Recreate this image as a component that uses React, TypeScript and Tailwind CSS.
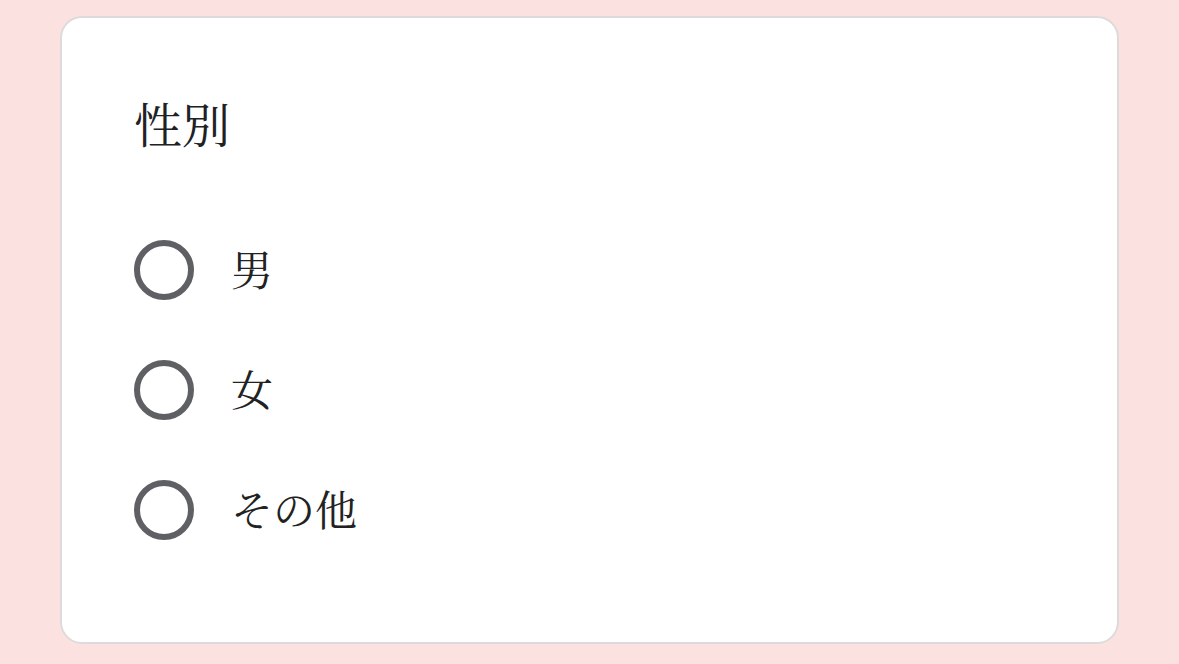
import React, { useState } from 'react';

const options = ['男', '女', 'その他'];

const fontStack = '"Noto Serif CJK JP", "Noto Sans CJK JP", serif';

const GenderField: React.FC = () => {
  const [selected, setSelected] = useState<string | null>(null);

  return (
    <div className="h-[628px] rounded-[22px] border-2 border-[#dedadc] bg-white pl-[72px] pt-[81px]">
      <h2 className="text-[48px] leading-none text-[#202124]" style={{ fontFamily: fontStack }}>
        性別
      </h2>

      <div className="mt-[63px] flex flex-col">
        {options.map((opt) => (
          <label key={opt} className="flex h-[120px] cursor-pointer items-center gap-[37px]">
            <input
              type="radio"
              name="gender"
              className="sr-only"
              checked={selected === opt}
              onChange={() => setSelected(opt)}
            />
            <span className="flex h-[60px] w-[60px] shrink-0 items-center justify-center rounded-full border-[6px] border-[#5f6064]">
              {selected === opt && <span className="h-[28px] w-[28px] rounded-full bg-[#5f6064]" />}
            </span>
            <span className="pb-[4px] text-[42px] leading-none text-[#222222]" style={{ fontFamily: fontStack }}>
              {opt}
            </span>
          </label>
        ))}
      </div>
    </div>
  );
};

export default function App() {
  return (
    <div className="min-h-[664px] w-full bg-[#fbe2e1] pl-[60px] pr-[60px] pt-[16px]">
      <GenderField />
    </div>
  );
}
